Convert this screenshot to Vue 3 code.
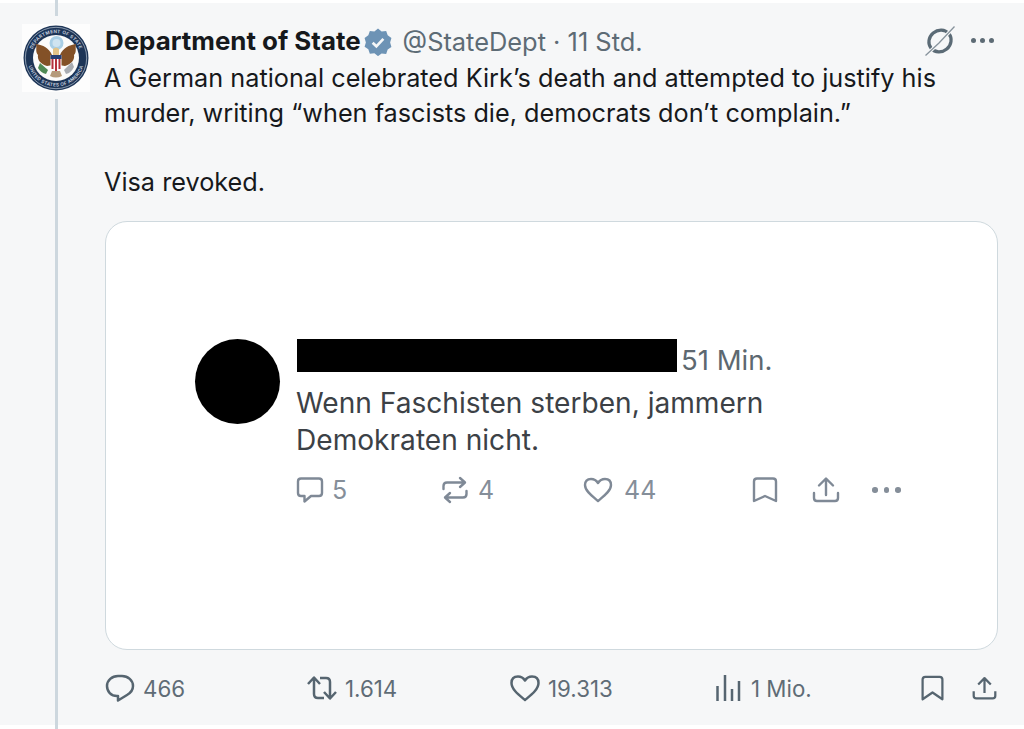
<script setup>
const inner = [
  { key: 'reply', label: '5', width: 145, gap: 7 },
  { key: 'rt', label: '4', width: 143, gap: 8 },
  { key: 'like', label: '44', width: 167, gap: 11 }
]
const outer = [
  { key: 'reply', label: '466', width: 202 },
  { key: 'rt', label: '1.614', width: 203 },
  { key: 'like', label: '19.313', width: 203 },
  { key: 'views', label: '1 Mio.', width: 205 }
]
</script>

<template>
  <div class="page">
    <div class="thread thread-top"></div>
    <div class="thread thread-bottom"></div>
    <main class="tweet">
      <div class="seal-box">
        <svg class="seal" viewBox="0 0 68 68" aria-hidden="true">
          <circle cx="34" cy="34" r="32.500" fill="#1d3557" />
          <circle cx="34" cy="34" r="30.700" fill="none" stroke="#b9c6d4" stroke-width="0.700" />
          <defs>
            <path id="ring-top" d="M9 34A25 25 0 0 1 59 34" />
            <path id="ring-bottom" d="M5.500 34A28.500 28.500 0 0 0 62.500 34" />
          </defs>
          <text class="ring-text"><textPath href="#ring-top" startOffset="50%" text-anchor="middle">DEPARTMENT OF STATE</textPath></text>
          <text class="ring-text"><textPath href="#ring-bottom" startOffset="50%" text-anchor="middle">UNITED STATES OF AMERICA</textPath></text>
          <circle cx="34" cy="34" r="23" fill="#fbfbfa" />
          <circle cx="34.500" cy="19" r="7" fill="#a9cfe6" />
          <circle cx="34.500" cy="19" r="4" fill="#cfe4f1" />
          <path d="M30 31 C27 24 21 21 14 20 C15 24 13 28 16 31 C15 36 19 40 25 42 L31 41Z" fill="#835127" />
          <path d="M38 31 C41 24 47 21 54 20 C53 24 55 28 52 31 C53 36 49 40 43 42 L37 41Z" fill="#835127" />
          <path d="M31 25 Q34 22 37 25 L37 32 H31Z" fill="#e3c48a" />
          <path d="M28.500 31 H39.500 V43 Q34 49 28.500 43Z" fill="#fff" />
          <path d="M28.500 31 H39.500 V35 H28.500Z" fill="#263f75" />
          <path d="M29.500 35 H31.500 V45 H29.500Z M33 35 H35 V47 H33Z M36.500 35 H38.500 V45 H36.500Z" fill="#b5313d" />
          <path d="M18 39 L26 46 L24 50 Q19 49 16 44Z" fill="#4f8a55" />
          <path d="M50 38 L42 46 L44 50 Q49 49 52 43Z" fill="#a9adb3" />
          <path d="M30 47 H38 L40 52 Q34 55 28 52Z" fill="#b59a7a" />
        </svg>
      </div>

      <div class="content">
        <header class="head">
          <strong class="name">Department of State</strong>
          <svg class="badge" viewBox="0 0 24 24" aria-hidden="true">
            <path d="M12 .5l3.100 2.400 3.900-.3 1.300 3.700 3.200 2.300-1.100 3.800 1.100 3.800-3.200 2.300-1.300 3.700-3.900-.3L12 24.100l-3.100-2.400-3.900.3-1.300-3.700L.5 16l1.100-3.600L.5 8.600l3.200-2.300L5 2.600l3.900.3z" fill="#6d93b5" />
            <path d="M7.400 12.600l3.200 3.100 6-6.400" fill="none" stroke="#f5f7f8" stroke-width="2.300" />
          </svg>
          <span class="meta">@StateDept · 11 Std.</span>
          <span class="spacer"></span>
          <svg class="grok" viewBox="0 0 34 34" aria-hidden="true">
            <ellipse cx="17" cy="17" rx="11.500" ry="10.500" transform="rotate(-40 17 17)" fill="none" stroke="#5b6b76" stroke-width="3.200" />
            <path d="M2 32 L16 19 L32 2" fill="none" stroke="#f6f7f8" stroke-width="3.400" />
            <path d="M2.500 31.500 L16 19 L31.500 2.500" fill="none" stroke="#87939c" stroke-width="1.300" />
          </svg>
          <span class="dots outer-dots"><i></i><i></i><i></i></span>
        </header>

        <p class="text">A German national celebrated Kirk’s death and attempted to justify his<br />murder, writing “when fascists die, democrats don’t complain.”</p>
        <p class="text visa">Visa revoked.</p>

        <section class="card">
          <div class="avatar"></div>
          <div class="quoted">
            <div class="quoted-head">
              <span class="redact"></span>
              <span class="time">51 Min.</span>
            </div>
            <p class="quoted-text">Wenn Faschisten sterben, jammern<br />Demokraten nicht.</p>
            <div class="quoted-actions">
              <div v-for="a in inner" :key="a.key" class="q-action" :style="{ width: a.width + 'px', gap: a.gap + 'px' }">
                <svg v-if="a.key === 'reply'" class="q-icon" viewBox="0 0 30 30" aria-hidden="true">
                  <path d="M6 3.500H24Q27 3.500 27 6.500V18Q27 21 24 21H16L9.500 26.500V21H6Q3 21 3 18V6.500Q3 3.500 6 3.500Z" />
                </svg>
                <svg v-else-if="a.key === 'rt'" class="q-icon" viewBox="0 0 30 30" aria-hidden="true">
                  <path d="M3.500 14V11Q3.500 7.500 7 7.500H24M20 3L25 7.500L20 12" />
                  <path d="M26.500 16V19Q26.500 22.500 23 22.500H6M10 18L5 22.500L10 27" />
                </svg>
                <svg v-else class="q-icon" viewBox="0 0 30 30" aria-hidden="true">
                  <path d="M15 26C9 21 2 16 2 10Q2 4 8 4Q12.500 4 15 8Q17.500 4 22 4Q28 4 28 10C28 16 21 21 15 26Z" />
                </svg>
                <span>{{ a.label }}</span>
              </div>
              <svg class="q-icon bookmark" viewBox="0 0 30 30" aria-hidden="true">
                <path d="M7 3.500H23Q26 3.500 26 6.500V26L15 21L4 26V6.500Q4 3.500 7 3.500Z" />
              </svg>
              <svg class="q-icon share" viewBox="0 0 30 30" aria-hidden="true">
                <path d="M15 20V4M8 10.500L15 3.500L22 10.500M3 18V23Q3 26 6 26H24Q27 26 27 23V18" />
              </svg>
              <span class="dots q-dots"><i></i><i></i><i></i></span>
            </div>
          </div>
        </section>

        <footer class="actions">
          <div v-for="a in outer" :key="a.key" class="action" :style="{ width: a.width + 'px' }">
            <svg v-if="a.key === 'reply'" class="o-icon" viewBox="0 0 30 30" aria-hidden="true">
              <path d="M13 3H17C23 3 28 7.500 28 13C28 17 25.500 20 22 22L13 27.500V23H12C6 23 2 18.500 2 13C2 7.500 7 3 13 3Z" />
            </svg>
            <svg v-else-if="a.key === 'rt'" class="o-icon" viewBox="0 0 30 30" aria-hidden="true">
              <path d="M1 11L7 4.500L13 11M7 5V21Q7 25 11 25H17" />
              <path d="M13 5H19Q23 5 23 9V25M17 19L23 25.500L29 19" />
            </svg>
            <svg v-else-if="a.key === 'like'" class="o-icon" viewBox="0 0 30 30" aria-hidden="true">
              <path d="M15 27C9 22 1.500 16.500 1.500 10Q1.500 3.500 8 3.500Q12.500 3.500 15 7.500Q17.500 3.500 22 3.500Q28.500 3.500 28.500 10C28.500 16.500 21 22 15 27Z" />
            </svg>
            <svg v-else class="o-icon" viewBox="0 0 30 30" aria-hidden="true">
              <path d="M4.500 28V13M12 28V2M19 28V16M26 28V8" />
            </svg>
            <span>{{ a.label }}</span>
          </div>
          <svg class="o-icon o-bookmark" viewBox="0 0 30 30" aria-hidden="true">
            <path d="M7 2.500H23Q26 2.500 26 5.500V27.500L15 20L4 27.500V5.500Q4 2.500 7 2.500Z" />
          </svg>
          <svg class="o-icon o-share" viewBox="0 0 30 30" aria-hidden="true">
            <path d="M15 20V4M8 10.500L15 3.500L22 10.500M3 18V23Q3 26 6 26H24Q27 26 27 23V18" />
          </svg>
        </footer>
      </div>
    </main>
  </div>
</template>

<style>
html, body { margin: 0; background: #fff; }
</style>

<style scoped>
.page {
  position: relative;
  width: 1024px;
  height: 729px;
  padding-top: 3px;
  box-sizing: border-box;
  overflow: hidden;
  font-family: Inter, "Liberation Sans", sans-serif;
  color: #16191c;
}
.thread {
  position: absolute;
  left: 55px;
  width: 3px;
  background: #cdd7de;
  z-index: 1;
}
.thread-top { top: 0; height: 16px; }
.thread-bottom { top: 99px; bottom: 0; }
.tweet {
  display: flex;
  height: 722px;
  box-sizing: border-box;
  background: #f6f7f8;
  padding: 21px 26px 0 22px;
}
.seal-box {
  flex: none;
  width: 68px;
  height: 68px;
  margin-right: 15px;
  background: #fdfdfd;
  position: relative;
  z-index: 2;
}
.seal { display: block; width: 68px; height: 68px; }
.ring-text { font-size: 4.600px; font-weight: 600; fill: #cfd8e2; letter-spacing: 0.300px; }
.content { flex: 1; min-width: 0; }
.head {
  display: flex;
  align-items: center;
  height: 34px;
  margin-bottom: 3px;
}
.name { font-size: 25.900px; font-weight: 700; line-height: 34px; }
.badge { width: 28px; height: 28px; margin: 1px 0 0 3px; }
.meta { font-size: 25.400px; color: #5d6b75; margin-left: 11px; }
.spacer { flex: 1; }
.grok { width: 34px; height: 34px; margin-right: 14px; }
.dots { display: inline-flex; }
.dots i { display: block; border-radius: 50%; background: #5d6b75; }
.outer-dots { gap: 4px; margin-right: 4px; margin-bottom: 2px; }
.outer-dots i { width: 5px; height: 5px; }
.text {
  margin: 0 0 0 -1px;
  font-size: 25.250px;
  line-height: 34.500px;
  color: #17191c;
}
.visa { margin-top: 34.500px; }
.card {
  box-sizing: border-box;
  height: 429px;
  margin-top: 22px;
  padding: 117px 0 0 89px;
  display: flex;
  background: #fff;
  border: 1px solid #cfd9de;
  border-radius: 22px;
}
.avatar {
  flex: none;
  width: 85px;
  height: 85px;
  border-radius: 50%;
  background: #000;
  margin-right: 17px;
}
.quoted { flex: 1; margin-left: -2px; }
.quoted-head { display: flex; align-items: center; height: 33px; margin-left: 2px; }
.redact { width: 380px; height: 33px; background: #000; }
.time { margin: 9px 0 0 4px; font-size: 27.500px; color: #5d6870; }
.quoted-text {
  margin: 13px 0 0 1px;
  font-size: 28.100px;
  line-height: 37px;
  color: #3c4146;
}
.quoted-actions {
  display: flex;
  align-items: center;
  margin-top: 13px;
  color: #858e99;
}
.q-action {
  display: flex;
  align-items: center;
  font-size: 25px;
  line-height: 36px;
}
.q-icon {
  width: 30px;
  height: 30px;
  fill: none;
  stroke: #7f8996;
  stroke-width: 2.400;
  stroke-linejoin: round;
  stroke-linecap: round;
}
.share { margin-left: 31px; }
.q-dots { gap: 6px; margin-left: 31px; }
.q-dots i { width: 5.500px; height: 5.500px; background: #858e99; }
.actions {
  display: flex;
  align-items: center;
  height: 32px;
  margin-top: 22px;
  color: #5f6c76;
  font-size: 22.300px;
}
.action { display: flex; align-items: center; gap: 8px; }
.o-icon {
  width: 30px;
  height: 30px;
  flex: none;
  fill: none;
  stroke: #566570;
  stroke-width: 2.500;
  stroke-linejoin: round;
}
.o-bookmark { width: 27px; height: 30px; margin-left: 1px; }
.o-share { width: 27px; height: 27px; margin-left: 25px; }
</style>
